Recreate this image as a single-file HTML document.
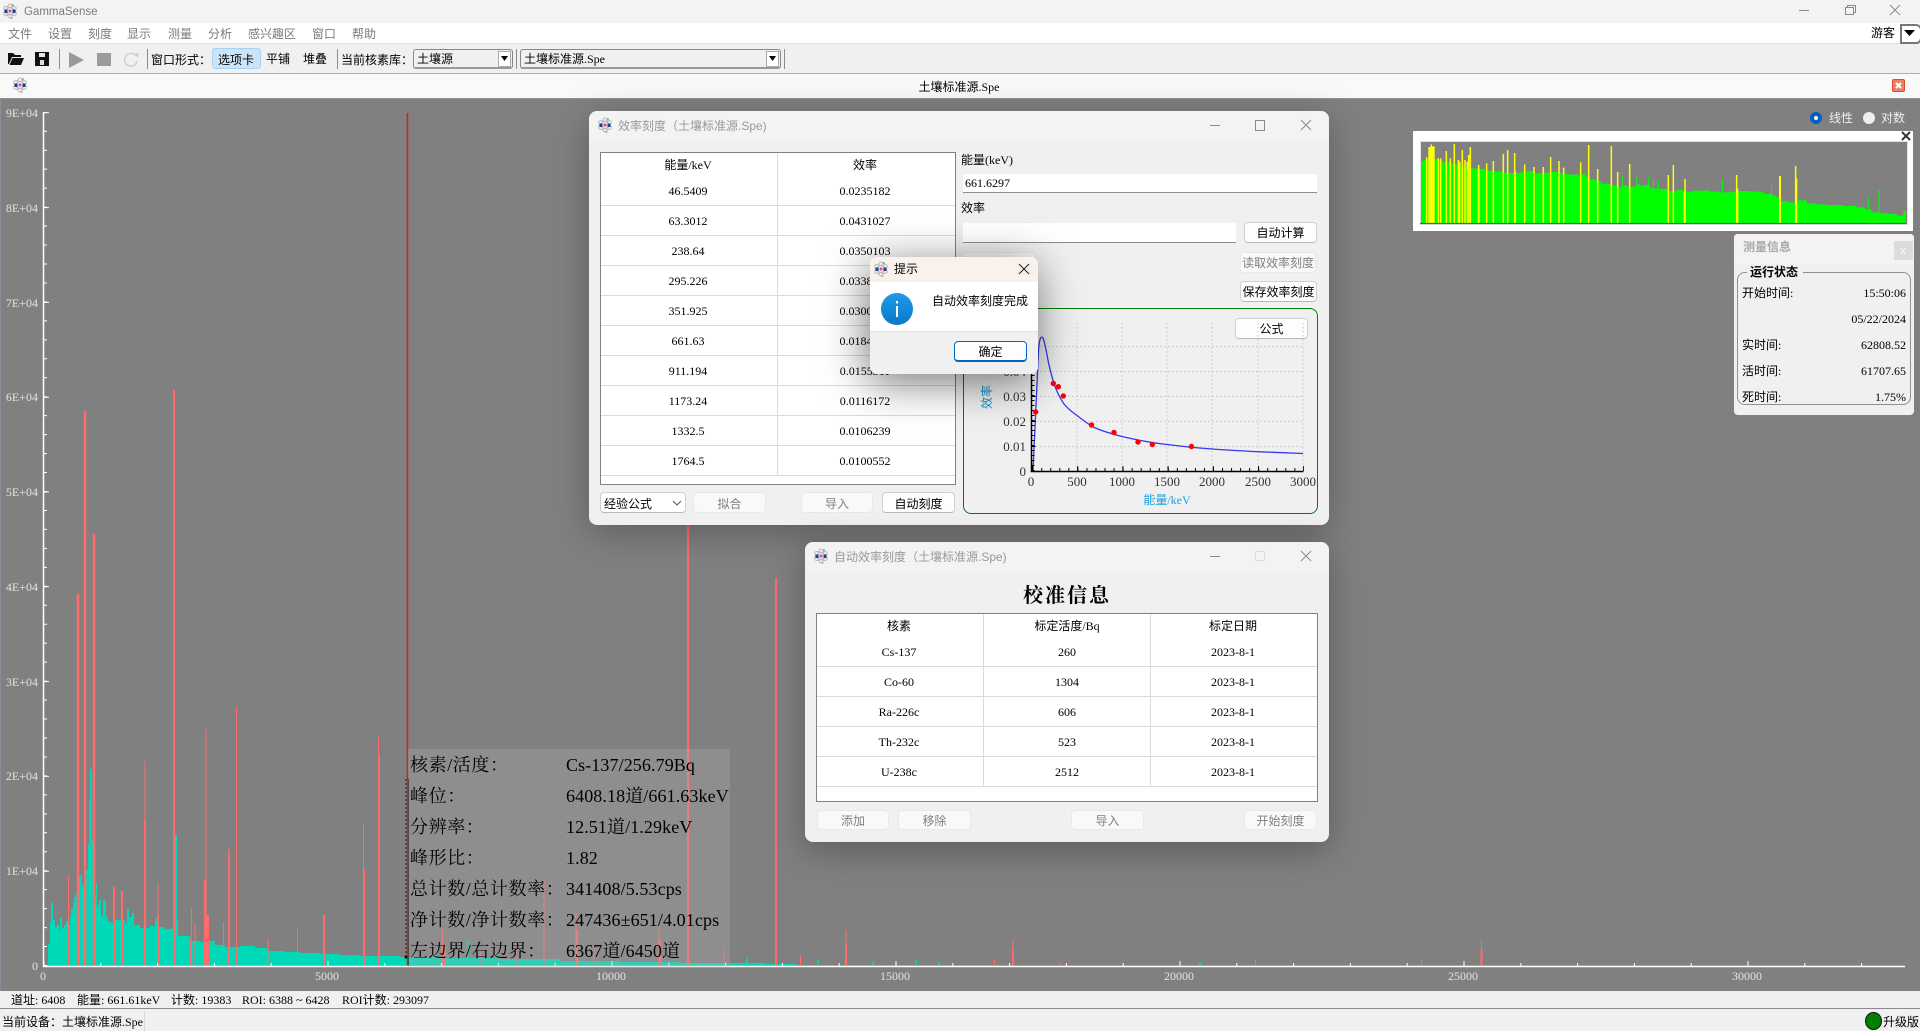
<!DOCTYPE html>
<html lang="zh"><head><meta charset="utf-8"><title>GammaSense</title>
<style>
html,body{margin:0;padding:0;width:1920px;height:1031px;overflow:hidden;background:#f0f0f0}
body{position:relative;font-family:"Liberation Sans","Noto Sans CJK SC",sans-serif;font-size:12px;color:#000}
.a,.t,.c,.r{position:absolute}
.t,.c,.r{white-space:nowrap;line-height:16px}
.t{transform:translateY(-50%)}
.c{transform:translate(-50%,-50%)}
.r{transform:translate(-100%,-50%)}
.s{font-family:"Liberation Serif","Noto Sans CJK SC",serif}
.m{color:#7a7a7a;top:34px}
.b{position:absolute;box-sizing:border-box;background:#fdfdfd;border:1px solid #d0d0d0;border-bottom-color:#b8b8b8;border-radius:4px;display:flex;align-items:center;justify-content:center}
.d{background:#f9f9f9;border-color:#e8e8e8;color:#808080}
.dlg{position:absolute;background:#f0f0f0;border-radius:8px;overflow:hidden}
.tb{position:absolute;left:0;top:0;right:0;background:#f3f3f3}
.gt{color:#999}
.inp{position:absolute;box-sizing:border-box;background:#fff;border-bottom:1px solid #8d8d8d}
.o{font-family:"Liberation Serif","Noto Serif CJK SC",serif;font-size:18px;line-height:22px}
.l{letter-spacing:.6px}
.v{letter-spacing:.1px}
.y{color:#e4e4e4;font-family:"Liberation Serif",serif}
svg{position:absolute;left:0;top:0;overflow:visible}
</style></head><body>

<svg width="0" height="0" style="position:absolute"><defs>
<symbol id="ico" viewBox="0 0 16 16"><g fill="none" stroke="#b9b9c4" stroke-width="1"><ellipse cx="8" cy="8" rx="3.2" ry="7"/><ellipse cx="8" cy="8" rx="3.2" ry="7" transform="rotate(60 8 8)"/><ellipse cx="8" cy="8" rx="3.2" ry="7" transform="rotate(120 8 8)"/></g><rect x="2.5" y="6.5" width="3" height="3.5" fill="#1f3f8a"/><rect x="10.5" y="6.5" width="3" height="3.5" fill="#1f3f8a"/><circle cx="8" cy="8" r="1.6" fill="#d8528a"/><circle cx="9.5" cy="15" r="1" fill="#f0a030"/><circle cx="11" cy="2" r=".9" fill="#3fb060"/></symbol>
</defs></svg>

<!-- title bar -->
<div class="a" style="left:0;top:0;width:1920px;height:23px;background:#f3f3f3"></div>
<svg width="16" height="16" style="left:2px;top:3px"><use href="#ico" width="16" height="16"/></svg>
<div class="t" style="left:24px;top:12px;color:#7b7b7b;font-size:11.5px">GammaSense</div>
<svg width="1920" height="23"><path d="M1799 10.500H1809" stroke="#8a8a8a"/><path d="M1845.500 7.500H1853.500V14.500H1845.500ZM1847.500 7.500V5.500H1855.500V12.500H1853.500" fill="none" stroke="#8a8a8a"/><path d="M1890 5L1900 15M1900 5L1890 15" stroke="#8a8a8a"/></svg>

<!-- menu -->
<div class="a" style="left:0;top:23px;width:1920px;height:20px;background:#fff"></div>
<div class="a" style="left:0;top:43px;width:1920px;height:1px;background:#e4e4e4"></div>
<div class="t m" style="left:8px">文件</div><div class="t m" style="left:48px">设置</div><div class="t m" style="left:88px">刻度</div><div class="t m" style="left:127px">显示</div><div class="t m" style="left:168px">测量</div><div class="t m" style="left:208px">分析</div><div class="t m" style="left:248px">感兴趣区</div><div class="t m" style="left:312px">窗口</div><div class="t m" style="left:352px">帮助</div>
<div class="t" style="left:1871px;top:33px">游客</div>
<div class="a" style="left:1900px;top:24px;width:18px;height:16px;background:#fff;border:2px solid #777;border-radius:0 6px 6px 0"></div>
<svg width="1920" height="44"><path d="M1904 30H1915L1909.500 36Z" fill="#000"/></svg>

<!-- toolbar -->
<div class="a" style="left:0;top:44px;width:1920px;height:29px;background:#f0f0f0;border-bottom:1px solid #aeaeae"></div>
<svg width="1920" height="74">
<path d="M8 64V53H13L15 55H21V57H12L9 64ZM9.500 65L12.500 58H24L21 65Z" fill="#111"/>
<path d="M35 52H49V66H35Z" fill="#111"/><rect x="39" y="53" width="6" height="4" fill="#e8e8e8"/><rect x="40" y="60" width="4" height="5" fill="#ddd"/>
<path d="M59.500 49V69M147.500 49V69M337.500 49V69M516.500 49V69M784.500 49V69" stroke="#8c8c8c"/>
<path d="M69 52L84 60L69 68Z" fill="#9a9a9a"/><rect x="97" y="53" width="14" height="13" fill="#9c9c9c"/>
<path d="M135.500 55.500A6.300 6.300 0 1 0 137 61" fill="none" stroke="#cfcfcf" stroke-width="1.500"/><path d="M134 53.500L138.500 53L138 58Z" fill="#cfcfcf"/>
</svg>
<div class="t" style="left:151px;top:60px">窗口形式：</div>
<div class="a" style="left:212px;top:48px;width:47px;height:19px;background:#cce4f7;border:1px solid #a9d3f2;border-radius:3px"></div>
<div class="c" style="left:236px;top:60px">选项卡</div>
<div class="t" style="left:266px;top:59px">平铺</div><div class="t" style="left:303px;top:59px">堆叠</div>
<div class="t" style="left:341px;top:60px">当前核素库：</div>
<div class="a" style="left:413px;top:49px;width:98px;height:17px;background:#f0f0f0;border:1px solid #888;border-bottom:2px solid #999;border-radius:3px"></div>
<div class="t s" style="left:417px;top:59px">土壤源</div>
<div class="a" style="left:498px;top:51px;width:11px;height:14px;background:#fff;border:1px solid #aaa"></div>
<div class="a" style="left:520px;top:49px;width:259px;height:17px;background:#f0f0f0;border:1px solid #888;border-bottom:2px solid #999;border-radius:3px"></div>
<div class="t s" style="left:524px;top:59px">土壤标准源.Spe</div>
<div class="a" style="left:766px;top:51px;width:11px;height:14px;background:#fff;border:1px solid #aaa"></div>
<svg width="1920" height="74"><path d="M501 56H508L504.500 61ZM769 56H776L772.500 61Z" fill="#000"/></svg>

<!-- tab bar -->
<div class="a" style="left:0;top:74px;width:1920px;height:24px;background:#f9f9f9;border-bottom:1px solid #8f8f8f"></div>
<svg width="16" height="16" style="left:12px;top:77px"><use href="#ico" width="16" height="16"/></svg>
<div class="c s" style="left:959px;top:87px">土壤标准源.Spe</div>
<div class="a" style="left:1892px;top:79px;width:13px;height:13px;background:#ec8060;border:1px solid #e04a30;box-sizing:border-box;border-radius:2px"></div>
<svg width="1920" height="99"><path d="M1896 83L1901 88M1901 83L1896 88" stroke="#fff" stroke-width="2"/></svg>

<!-- plot canvas -->
<div class="a" style="left:0;top:99px;width:1920px;height:892px;background:#808080;border-left:1px solid #878d99;box-sizing:border-box"></div>
<svg width="1920" height="1031">
<path fill="#00d9b7" d="M48 966V944H50V922H51V903H53V920H55V927H57V925H59V930H60V918H62V928H64V925H66V921H68V925H70V915H71V909H73V903H74V897H76V893H79V875H82V885H84V870H87V869H88V845H89V800H90V769H92V840H93V883H95V897H96V883H97V905H99V900H101V916H103V900H106V917H108V922H115V920H125V923H127V909H129V917H132V913H134V925H140V928H150V926H155V919H157V927H165V929H175V835H177V920H178V936H190V941H200V942H205V941H215V945H225V947H240V946H255V948H268V951H285V952H300V953H320V954H340V955H360V956H400V957H440V958H500V959H560V961H620V962H680V963H766V964H795V965H1000V965.500H1905V966Z"/>
<path stroke="#00d9b7" stroke-width="1.500" fill="none" d="M747 966V958M818 966V960M873 966V961M916 966V959M939 966V962M1200 966V962M468 966V940"/>
<g fill="none" stroke="#ff6b6b">
<path stroke-width="1" d="M68.500 966V876M145 966V761M206 966V729M229 966V848M158 966V884M191.500 966V908M195 966V923M208.500 966V915M223.500 966V922M236.500 966V708M268 966V938M297.500 966V927M363.500 966V823M378.500 966V737M442.500 966V930M480 966V950M516 966V945M544 966V878M576 966V912M594 966V947M659 966V925M724 966V950M800.500 966V955M846 966V930M994.500 966V959M1013 966V939M1060 966V962M1255.500 966V959M1421.500 966V959M1481.500 966V940"/>
<path stroke-width="2.500" d="M78 966V594M85 966V411M94 966V534"/>
<path stroke-width="2" d="M114 966V887M122 966V891M145 966V820M158 966V915M174 966V390M191 966V940M205 966V880M207.500 966V915M229 966V854M324 966V915M364 966V870M379 966V755M445 966V945M577 966V930M660 966V940M688 966V526M776 966V578M846 966V945M1013 966V950M1481.500 966V950"/>
</g>
<path d="M407.500 113V966" stroke="#e01818" stroke-width="1.500"/>
<path d="M408.500 779V966" stroke="#222" stroke-width="1"/>
<path d="M406 779V957" stroke="#222" stroke-dasharray="2 2"/><circle cx="406" cy="957" r="1.500" fill="#111"/>
<path d="M43.500 112V966.500H1905" fill="none" stroke="#fff" stroke-width="1.500"/>
<path d="M45.500 966V112" stroke="#fff" stroke-width="3" stroke-dasharray="1 17.960" fill="none"/>
<path d="M46.500 966.500V112" stroke="#fff" stroke-width="5" stroke-dasharray="1 93.800" fill="none"/>
<path d="M43.500 964.500H1905" stroke="#fff" stroke-width="3" stroke-dasharray="1 55.800" fill="none"/>
<path d="M43.500 963.500H1905" stroke="#fff" stroke-width="5" stroke-dasharray="1 283" fill="none"/>
</svg>
<div class="r y" style="left:38px;top:113px">9E+04</div><div class="r y" style="left:38px;top:208px">8E+04</div><div class="r y" style="left:38px;top:303px">7E+04</div><div class="r y" style="left:38px;top:397px">6E+04</div><div class="r y" style="left:38px;top:492px">5E+04</div><div class="r y" style="left:38px;top:587px">4E+04</div><div class="r y" style="left:38px;top:682px">3E+04</div><div class="r y" style="left:38px;top:776px">2E+04</div><div class="r y" style="left:38px;top:871px">1E+04</div><div class="r y" style="left:38px;top:966px">0</div>
<div class="c y" style="left:43px;top:976px">0</div><div class="c y" style="left:327px;top:976px">5000</div><div class="c y" style="left:611px;top:976px">10000</div><div class="c y" style="left:895px;top:976px">15000</div><div class="c y" style="left:1179px;top:976px">20000</div><div class="c y" style="left:1463px;top:976px">25000</div><div class="c y" style="left:1747px;top:976px">30000</div>

<!-- ROI overlay -->
<div class="a" style="left:408px;top:749px;width:322px;height:218px;background:rgba(175,175,180,.3)"></div>
<div class="t o l" style="left:410px;top:765px">核素/活度：</div><div class="t o v" style="left:566px;top:765px">Cs-137/256.79Bq</div>
<div class="t o l" style="left:410px;top:796px">峰位：</div><div class="t o v" style="left:566px;top:796px">6408.18道/661.63keV</div>
<div class="t o l" style="left:410px;top:827px">分辨率：</div><div class="t o v" style="left:566px;top:827px">12.51道/1.29keV</div>
<div class="t o l" style="left:410px;top:858px">峰形比：</div><div class="t o v" style="left:566px;top:858px">1.82</div>
<div class="t o l" style="left:410px;top:889px">总计数/总计数率：</div><div class="t o v" style="left:566px;top:889px">341408/5.53cps</div>
<div class="t o l" style="left:410px;top:920px">净计数/净计数率：</div><div class="t o v" style="left:566px;top:920px">247436±651/4.01cps</div>
<div class="t o l" style="left:410px;top:951px">左边界/右边界：</div><div class="t o v" style="left:566px;top:951px">6367道/6450道</div>

<!-- radio -->
<div class="a" style="left:1810px;top:112px;width:12px;height:12px;border-radius:50%;background:#fff;border:4px solid #0060c0;box-sizing:border-box"></div>
<div class="t" style="left:1829px;top:118px;color:#f0f0f0">线性</div>
<div class="a" style="left:1863px;top:112px;width:12px;height:12px;border-radius:50%;background:#eee"></div>
<div class="t" style="left:1881px;top:118px;color:#f0f0f0">对数</div>

<!-- overview -->
<div class="a" style="left:1413px;top:131px;width:500px;height:100px;background:#fff"></div>
<div class="a" style="left:1421px;top:142px;width:486px;height:82px;background:#808080;box-shadow:0 0 0 1px #e0e0e0"></div>
<svg width="1920" height="1031"><g transform="translate(1410 125) scale(.33333)">
<path fill="#0f0" d="M33 295V108H40V105H50V100H60V95H72V102H85V108H100V112H125V117H140V122H155V125H180V130H205V132H225V137H250V140H280V143H300V144H330V142H350V138H375V145H400V143H420V141H445V144H462V147H480V149H510V147H525V155H540V163H560V168H575V176H600V182H625V186H640V180H650V185H680V178H690V183H700V180H720V190H750V192H775V198H800V195H820V200H850V197H900V200H930V202H965V200H985V198H1020V200H1060V207H1085V212H1100V217H1115V228H1135V232H1165V226H1190V235H1220V238H1250V240H1300V243H1340V247H1365V253H1385V262H1410V265H1440V267H1460V272H1480V258H1488V295Z"/>
<path stroke="#0f0" stroke-width="3" fill="none" d="M937 295V165M1085 295V180M1375 295V220M1407 295V195M715 295V155M680 295V155M637 295V155M730 295V165M745 295V170M1187 295V225"/>
<path stroke="#ff0" stroke-width="4.500" fill="none" d="M50 295V97M64 295V58M85 295V100M92 295V100M109 295V78M121 295V100M133 295V57M145 295V105M149 295V110M157 295V75M165 295V105M172 295V110M176 295V90M181 295V66M206 295V120M230 295V115M250 295V108M280 295V87M293 295V75M314 295V84M344 295V118M372 295V126M400 295V126M422 295V96M447 295V108M461 295V128M512 295V112M536 295V60M563 295V132M604 295V63M623 295V141M659 295V117M775 295V150M790 295V120M825 295V162M980 295V150M1110 295V153M1157 295V123"/>
<path stroke="#ff0" stroke-width="8" fill="none" d="M59 295V66M70 295V64"/>
<path stroke="#ff0" stroke-width="6" fill="none" d="M206 295V135M824 295V200M982 295V190M1110 295V153M1159 295V160M315 295V140"/>
<path d="M30 295.500H1488" stroke="#0a7f85" stroke-width="4"/>
</g><path d="M1902 132L1910 140M1910 132L1902 140" stroke="#333" stroke-width="2"/></svg>

<!-- measure panel -->
<div class="a" style="left:1734px;top:234px;width:180px;height:181px;background:#f0f0f0;border-radius:4px;overflow:hidden">
<div class="a" style="left:0;top:0;width:180px;height:30px;background:#f3f3f3"></div>
<div class="a" style="left:160px;top:7px;width:19px;height:19px;background:#dcdcdc"></div>
<div class="c" style="left:169px;top:17px;color:#f4f4f4;font-size:11px;font-weight:bold">x</div>
<div class="a" style="left:3px;top:38px;width:174px;height:133px;border:1px solid #909090;border-radius:8px;box-sizing:border-box"></div>
</div>
<div class="t" style="left:1743px;top:247px;color:#a8a8a8;font-weight:bold">测量信息</div>
<div class="t" style="left:1747px;top:272px;background:#f0f0f0;padding:0 5px 0 3px;font-weight:bold">运行状态</div>
<div class="t s" style="left:1742px;top:293px">开始时间:</div><div class="r s" style="left:1906px;top:293px">15:50:06</div>
<div class="r s" style="left:1906px;top:319px">05/22/2024</div>
<div class="t s" style="left:1742px;top:345px">实时间:</div><div class="r s" style="left:1906px;top:345px">62808.52</div>
<div class="t s" style="left:1742px;top:371px">活时间:</div><div class="r s" style="left:1906px;top:371px">61707.65</div>
<div class="t s" style="left:1742px;top:397px">死时间:</div><div class="r s" style="left:1906px;top:397px">1.75%</div>

<!-- efficiency dialog -->
<div class="dlg" style="left:589px;top:111px;width:740px;height:414px;box-shadow:0 8px 36px rgba(0,0,0,.28)">
<div class="tb" style="height:31px"></div></div>
<svg width="16" height="16" style="left:597px;top:117px"><use href="#ico" width="16" height="16"/></svg>
<div class="t gt" style="left:618px;top:126px">效率刻度（土壤标准源.Spe)</div>
<svg width="1920" height="1031"><path d="M1210 125.500H1220M1255.500 120.500H1264.500V130.500H1255.500ZM1301 120L1311 130M1311 120L1301 130" fill="none" stroke="#8a8a8a"/></svg>

<div class="a" style="left:600px;top:152px;width:356px;height:333px;background:#fff;border:1px solid #7f7f8c;box-sizing:border-box"></div>
<svg width="1920" height="1031"><path d="M777.500 153V475M601 205.500H955M601 235.500H955M601 265.500H955M601 295.500H955M601 325.500H955M601 355.500H955M601 385.500H955M601 415.500H955M601 445.500H955M601 475.500H955" stroke="#dadada" fill="none"/></svg>
<div class="c s" style="left:688px;top:165px">能量/keV</div><div class="c s" style="left:865px;top:165px">效率</div>
<div class="c s" style="left:688px;top:191px">46.5409</div><div class="c s" style="left:865px;top:191px">0.0235182</div>
<div class="c s" style="left:688px;top:221px">63.3012</div><div class="c s" style="left:865px;top:221px">0.0431027</div>
<div class="c s" style="left:688px;top:251px">238.64</div><div class="c s" style="left:865px;top:251px">0.0350103</div>
<div class="c s" style="left:688px;top:281px">295.226</div><div class="c s" style="left:865px;top:281px">0.0338291</div>
<div class="c s" style="left:688px;top:311px">351.925</div><div class="c s" style="left:865px;top:311px">0.0300128</div>
<div class="c s" style="left:688px;top:341px">661.63</div><div class="c s" style="left:865px;top:341px">0.0184216</div>
<div class="c s" style="left:688px;top:371px">911.194</div><div class="c s" style="left:865px;top:371px">0.0155311</div>
<div class="c s" style="left:688px;top:401px">1173.24</div><div class="c s" style="left:865px;top:401px">0.0116172</div>
<div class="c s" style="left:688px;top:431px">1332.5</div><div class="c s" style="left:865px;top:431px">0.0106239</div>
<div class="c s" style="left:688px;top:461px">1764.5</div><div class="c s" style="left:865px;top:461px">0.0100552</div>

<div class="b" style="left:600px;top:492px;width:86px;height:21px;background:#fff;justify-content:flex-start;padding-left:3px;padding-top:1px">经验公式</div>
<svg width="1920" height="1031"><path d="M673 501L677 505L681 501" fill="none" stroke="#555"/></svg>
<div class="b d" style="left:693px;top:492px;width:73px;height:21px;padding-top:1px">拟合</div>
<div class="b d" style="left:801px;top:492px;width:72px;height:21px;padding-top:1px">导入</div>
<div class="b" style="left:882px;top:492px;width:73px;height:21px;padding-top:1px">自动刻度</div>

<div class="t s" style="left:961px;top:160px">能量(keV)</div>
<div class="inp" style="left:963px;top:174px;width:354px;height:19px"></div>
<div class="t s" style="left:965px;top:183px">661.6297</div>
<div class="t s" style="left:961px;top:208px">效率</div>
<div class="inp" style="left:963px;top:223px;width:273px;height:20px"></div>
<div class="b" style="left:1244px;top:222px;width:73px;height:21px">自动计算</div>
<div class="b d" style="left:963px;top:252px;width:73px;height:21px">手动</div>
<div class="b d" style="left:1240px;top:252px;width:76px;height:21px">读取效率刻度</div>
<div class="b" style="left:1240px;top:281px;width:77px;height:21px">保存效率刻度</div>

<div class="a" style="left:963px;top:308px;width:355px;height:206px;box-sizing:border-box;border:1px solid #008000;border-radius:8px"></div>
<div class="b" style="left:1235px;top:318px;width:73px;height:21px">公式</div>
<svg width="1920" height="1031" font-family="Liberation Serif">
<path d="M1077 323V471M1122 323V471M1167 323V471M1212 323V471M1258 323V471M1303 323V471M1032 446.500H1303M1032 421.500H1303M1032 396.500H1303M1032 371.500H1303M1032 346.500H1303" stroke="#c4c4c4" stroke-dasharray="1.500 2.500" fill="none"/>
<path d="M1033 471C1034.500 445 1036.500 395 1038.500 350C1039.500 338 1041 335.500 1043 338C1045.500 344 1047 356 1049 365C1051 373 1053 382 1056 389C1059 396 1061 400 1064 404C1068 409 1072 412 1077 415.500C1083 420 1088 424 1093 427C1102 431 1112 434 1122 436.500C1137 440 1152 443 1167 444.500C1182 446.500 1197 448 1212 449C1227 450 1243 451 1258 451.700C1273 452.400 1288 453 1303 453.500" fill="none" stroke="#3838ee" stroke-width="1.300"/>
<path d="M1031.500 340V471.500H1303.500" fill="none" stroke="#000" stroke-width="1.500"/>
<path d="M1033 471V340" stroke="#000" stroke-width="3" stroke-dasharray="1 4" fill="none"/>
<path d="M1032 469.500H1304" stroke="#000" stroke-width="3" stroke-dasharray="1 8.040" stroke-dashoffset="-.2" fill="none"/>
<path d="M1032 468.500H1304" stroke="#000" stroke-width="5" stroke-dasharray="1 44.200" fill="none"/>
<path d="M1035.500 446.500H1032M1035.500 421.500H1032M1035.500 396.500H1032" stroke="#000"/>
<g fill="#f00"><circle cx="1035.700" cy="412" r="2.700"/><circle cx="1053.300" cy="383.500" r="2.700"/><circle cx="1058.300" cy="386.700" r="2.700"/><circle cx="1063.300" cy="396" r="2.700"/><circle cx="1091.500" cy="425" r="2.700"/><circle cx="1114" cy="432.500" r="2.700"/><circle cx="1138" cy="442" r="2.700"/><circle cx="1152.300" cy="444.500" r="2.700"/><circle cx="1191.500" cy="446.500" r="2.700"/></g>
<g fill="#333" font-size="13" text-anchor="end"><text x="1026" y="476">0</text><text x="1026" y="451">0.01</text><text x="1026" y="426">0.02</text><text x="1026" y="401">0.03</text><text x="1026" y="376">0.04</text></g>
<g fill="#333" font-size="13" text-anchor="middle"><text x="1031" y="486">0</text><text x="1077" y="486">500</text><text x="1122" y="486">1000</text><text x="1167" y="486">1500</text><text x="1212" y="486">2000</text><text x="1258" y="486">2500</text><text x="1303" y="486">3000</text></g>
</svg>
<div class="c s" style="left:1167px;top:500px;color:#1aa0e0">能量/keV</div>
<div class="c s" style="left:987px;top:397px;color:#0d8fc8;transform:translate(-50%,-50%) rotate(-90deg)">效率</div>

<!-- auto dialog -->
<div class="dlg" style="left:805px;top:542px;width:524px;height:300px;box-shadow:0 8px 36px rgba(0,0,0,.3)">
<div class="tb" style="height:30px"></div></div>
<svg width="16" height="16" style="left:813px;top:548px"><use href="#ico" width="16" height="16"/></svg>
<div class="t gt" style="left:834px;top:557px">自动效率刻度（土壤标准源.Spe)</div>
<svg width="1920" height="1031"><path d="M1210 556.500H1220M1301 551L1311 561M1311 551L1301 561" fill="none" stroke="#8a8a8a"/><rect x="1255.500" y="551.500" width="9" height="9" fill="none" stroke="#ddd"/></svg>
<div class="c" style="left:1067px;top:596px;font-family:'Liberation Serif','Noto Serif CJK SC',serif;font-size:20px;font-weight:bold;letter-spacing:2px;line-height:24px">校准信息</div>
<div class="a" style="left:816px;top:613px;width:502px;height:189px;background:#fff;border:1px solid #7f7f8c;box-sizing:border-box"></div>
<svg width="1920" height="1031"><path d="M983.500 614V786M1150.500 614V786M817 666.500H1317M817 696.500H1317M817 726.500H1317M817 756.500H1317M817 786.500H1317" stroke="#dadada" fill="none"/></svg>
<div class="c s" style="left:899px;top:626px">核素</div><div class="c s" style="left:1067px;top:626px">标定活度/Bq</div><div class="c s" style="left:1233px;top:626px">标定日期</div>
<div class="c s" style="left:899px;top:652px">Cs-137</div><div class="c s" style="left:1067px;top:652px">260</div><div class="c s" style="left:1233px;top:652px">2023-8-1</div>
<div class="c s" style="left:899px;top:682px">Co-60</div><div class="c s" style="left:1067px;top:682px">1304</div><div class="c s" style="left:1233px;top:682px">2023-8-1</div>
<div class="c s" style="left:899px;top:712px">Ra-226c</div><div class="c s" style="left:1067px;top:712px">606</div><div class="c s" style="left:1233px;top:712px">2023-8-1</div>
<div class="c s" style="left:899px;top:742px">Th-232c</div><div class="c s" style="left:1067px;top:742px">523</div><div class="c s" style="left:1233px;top:742px">2023-8-1</div>
<div class="c s" style="left:899px;top:772px">U-238c</div><div class="c s" style="left:1067px;top:772px">2512</div><div class="c s" style="left:1233px;top:772px">2023-8-1</div>
<div class="b d" style="left:817px;top:810px;width:72px;height:20px">添加</div>
<div class="b d" style="left:898px;top:810px;width:73px;height:20px">移除</div>
<div class="b d" style="left:1071px;top:810px;width:73px;height:20px">导入</div>
<div class="b d" style="left:1244px;top:810px;width:73px;height:20px">开始刻度</div>

<!-- message dialog -->
<div class="dlg" style="left:870px;top:257px;width:168px;height:117px;box-shadow:-2px 8px 44px rgba(0,0,0,.55);border-radius:7px">
<div class="a" style="left:0;top:0;width:168px;height:25px;background:#f8f1ec"></div>
<div class="a" style="left:0;top:25px;width:168px;height:49px;background:#fff;border-bottom:1px solid #dfdfdf"></div>
</div>
<svg width="16" height="16" style="left:873px;top:261px"><use href="#ico" width="16" height="16"/></svg>
<div class="t" style="left:894px;top:269px">提示</div>
<svg width="1920" height="1031"><defs><linearGradient id="ib" x1="0" y1="0" x2="0" y2="1"><stop offset="0" stop-color="#1e9be8"/><stop offset="1" stop-color="#0a78c8"/></linearGradient></defs>
<path d="M1019 264L1029 274M1029 264L1019 274" stroke="#222" fill="none"/>
<circle cx="897" cy="309" r="16" fill="url(#ib)"/><rect x="896" y="306" width="2" height="11" fill="#fff"/><rect x="896" y="301" width="2" height="2.500" fill="#fff"/></svg>
<div class="t" style="left:932px;top:301px">自动效率刻度完成</div>
<div class="b" style="left:954px;top:341px;width:73px;height:21px;border:1px solid #0067c0;border-bottom-width:2px;padding-top:1px">确定</div>

<!-- status bars -->
<div class="a" style="left:0;top:991px;width:1920px;height:17px;background:#f0f0f0;border-bottom:1px solid #8a8a96"></div>
<div class="t s" style="left:11px;top:1000px">道址: 6408</div>
<div class="t s" style="left:77px;top:1000px">能量: 661.61keV</div>
<div class="t s" style="left:171px;top:1000px">计数: 19383</div>
<div class="t s" style="left:242px;top:1000px">ROI: 6388 ~ 6428</div>
<div class="t s" style="left:342px;top:1000px">ROI计数: 293097</div>
<div class="t s" style="left:2px;top:1022px">当前设备：土壤标准源.Spe</div>
<div class="a" style="left:144px;top:1011px;width:1px;height:20px;background:#d8d8d8"></div>
<div class="a" style="left:1865px;top:1012px;width:17px;height:18px;border-radius:50%;background:#007f00;border:1px solid #111;box-sizing:border-box"></div>
<div class="t" style="left:1883px;top:1022px">升级版</div>

</body></html>
